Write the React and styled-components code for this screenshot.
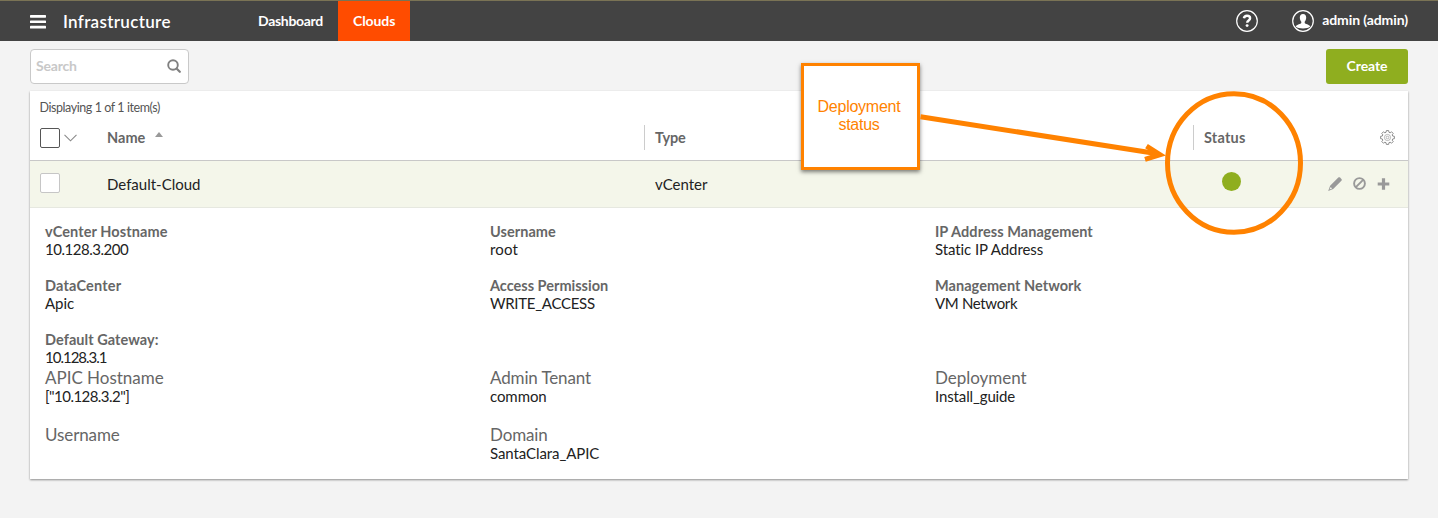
import React from 'react';
import styled, { createGlobalStyle } from 'styled-components';

const GlobalStyle = createGlobalStyle`
  * { box-sizing: border-box; }
  body {
    margin: 0;
    background: #f3f3f3;
    font-family: Lato, 'Liberation Sans', sans-serif;
    color: #222;
  }
`;

const Page = styled.div`
  position: relative;
  width: 1438px;
  height: 518px;
  overflow: hidden;
`;

const Text = styled.span`
  letter-spacing: ${(p) => p.$track || 0}px;
  white-space: nowrap;
`;

const TopBar = styled.header`
  display: flex;
  align-items: stretch;
  height: 41px;
  padding: 0 30px;
  background: #434343;
  border-top: 1px solid #7a7355;
  color: #fff;
`;

const MenuButton = styled.button`
  display: flex;
  align-items: center;
  width: 33px;
  padding: 2px 0 0;
  border: 0;
  background: none;
`;

const AppTitle = styled.h1`
  width: 180px;
  margin: 0;
  font-size: 17px;
  font-weight: 600;
  line-height: 41px;
`;

const Tab = styled.a`
  padding: 0 15px;
  width: ${(p) => p.$width}px;
  font-size: 14px;
  font-weight: 700;
  line-height: 40px;
  background: ${(p) => (p.$active ? '#ff4c00' : 'transparent')};
`;

const UserArea = styled.div`
  display: flex;
  align-items: center;
  margin-left: auto;
  font-size: 14px;
  font-weight: 700;
  line-height: 18px;
  svg { display: block; }
`;

const UserIcon = styled.span`
  margin: 0 8px 0 34px;
`;

const UserName = styled(Text)`
  padding-bottom: 2px;
`;

const Toolbar = styled.div`
  display: flex;
  justify-content: space-between;
  padding: 8px 30px 7px;
`;

const SearchBox = styled.div`
  display: flex;
  align-items: center;
  justify-content: space-between;
  width: 159px;
  height: 35px;
  padding: 0 7px 1px 5px;
  border: 1px solid #c9c9c9;
  border-radius: 4px;
  background: #fff;
  color: #c8c8c8;
  font-size: 14px;
  font-weight: 700;
  line-height: 18px;
`;

const CreateButton = styled.button`
  width: 82px;
  height: 35px;
  padding: 0 0 1px;
  border: 0;
  border-radius: 3px;
  background: #8fae1f;
  color: #fff;
  font: 700 14px/32px Lato, sans-serif;
`;

const Panel = styled.main`
  height: 388px;
  margin: 0 30px;
  background: #fff;
  box-shadow: 0 1px 2px rgba(0, 0, 0, 0.42);
`;

const Summary = styled.div`
  height: 26px;
  padding: 8px 10px 0 9.5px;
  color: #555;
  font-size: 12.5px;
  line-height: 18px;
`;

const GridRow = styled.div`
  display: grid;
  grid-template-columns: 77px 537px 549px 1fr auto;
  align-items: center;
`;

const HeadRow = styled(GridRow)`
  height: 44px;
  padding-bottom: 2px;
  border-bottom: 1px solid #c8c8c8;
  color: #666;
  font-size: 14.5px;
  font-weight: 700;
`;

const DataRow = styled(GridRow)`
  height: 47px;
  border-bottom: 1px solid #e6e8e0;
  background: #f4f6ea;
  font-size: 15px;
  line-height: 18px;
`;

const SelectCell = styled.div`
  display: flex;
  align-items: center;
  gap: 4px;
  padding-left: 10px;
`;

const CheckBox = styled.span`
  width: 20px;
  height: 20px;
  margin-top: ${(p) => (p.$strong ? 0 : -2)}px;
  border: 1px solid ${(p) => (p.$strong ? '#555' : '#c6c6c6')};
  border-radius: 2px;
  background: #fff;
`;

const HeadCell = styled.div`
  display: flex;
  align-items: center;
  height: 25px;
  padding-left: ${(p) => (p.$divided ? 10 : 0)}px;
  border-left: ${(p) => (p.$divided ? '1px solid #ccc' : '0')};
`;

const SortArrow = styled.span`
  margin: -7px 0 0 10px;
  border: 4.5px solid transparent;
  border-top: 0;
  border-bottom: 5px solid #999;
`;

const Cell = styled.div`
  padding: 0 0 1px ${(p) => p.$indent || 0}px;
`;

const StatusDot = styled.span`
  display: block;
  width: 19px;
  height: 19px;
  margin: -4px 0 0 28.5px;
  border-radius: 50%;
  background: #8fae1f;
`;

const Actions = styled.div`
  display: flex;
  align-items: center;
  gap: 11px;
  padding: 0 18px 1px 0;
  svg { display: block; }
`;

const SettingsCell = styled.div`
  padding-right: 13px;
  svg { display: block; }
`;

const Details = styled.dl`
  display: grid;
  grid-template-columns: repeat(3, 445px);
  margin: 0;
  padding: ${(p) => (p.$large ? '1px 0 0 15px' : '14px 0 0 15px')};
  row-gap: ${(p) => (p.$large ? 19 : 18)}px;
`;

const Field = styled.div`
  min-height: ${(p) => (p.$large ? 38 : 36)}px;
`;

const Term = styled.dt`
  padding-top: 1px;
  color: #666;
  font-size: ${(p) => (p.$large ? 17 : 14.5)}px;
  font-weight: ${(p) => (p.$large ? 400 : 700)};
  line-height: ${(p) => (p.$large ? 19 : 17)}px;
  ${(p) => (p.$large ? 'padding-top: 2px; line-height: 18px;' : 'padding-top: 2px; line-height: 16px;')}
`;

const Value = styled.dd`
  margin: 0;
  font-size: 15px;
  line-height: 18px;
`;

const Callout = styled.div`
  position: absolute;
  left: 801px;
  top: 63px;
  width: 119px;
  height: 107px;
  padding: 32px 3px 0 0;
  border: 3px solid #ff8200;
  background: #fff;
  box-shadow: 0 2px 4px rgba(0, 0, 0, 0.5);
  color: #ff8200;
  font: 16px/18px 'Liberation Sans', Arial, sans-serif;
  letter-spacing: -0.25px;
  text-align: center;
`;

const Annotation = styled.svg`
  position: absolute;
  left: 0;
  top: 0;
  pointer-events: none;
`;

const vcenterFields = [
  ['vCenter Hostname', 0.09, '10.128.3.200', -0.47],
  ['Username', 0.05, 'root', 0.12],
  ['IP Address Management', 0.06, 'Static IP Address', -0.08],
  ['DataCenter', 0.18, 'Apic', -0.04],
  ['Access Permission', 0, 'WRITE_ACCESS', -0.28],
  ['Management Network', 0.04, 'VM Network', -0.34],
  ['Default Gateway:', 0.05, '10.128.3.1', -1],
];

const apicFields = [
  ['APIC Hostname', -0.02, '["10.128.3.2"]', -0.54],
  ['Admin Tenant', -0.14, 'common', -0.08],
  ['Deployment', -0.03, 'Install_guide', -0.13],
  ['Username', -0.1, '', 0],
  ['Domain', -0.13, 'SantaClara_APIC', -0.08],
];

const FieldList = ({ fields, large }) => (
  <Details $large={large}>
    {fields.map(([term, termTrack, value, valueTrack]) => (
      <Field key={term} $large={large}>
        <Term $large={large}><Text $track={termTrack}>{term}</Text></Term>
        <Value><Text $track={valueTrack}>{value}</Text></Value>
      </Field>
    ))}
  </Details>
);

const MenuIcon = () => (
  <svg width="16" height="14" viewBox="0 0 16 14" fill="#fff">
    <rect y="0" width="16" height="2.7" rx=".6" />
    <rect y="5.4" width="16" height="2.7" rx=".6" />
    <rect y="10.8" width="16" height="2.7" rx=".6" />
  </svg>
);

const HelpIcon = () => (
  <svg width="22" height="22" viewBox="0 0 22 22" fill="none" stroke="#fff">
    <circle cx="11" cy="11" r="10.3" strokeWidth="1.2" />
    <path d="M7.9 8.300C8.200 6.500 9.400 5.700 11 5.700c1.900 0 3.100 1 3.100 2.500 0 2.300-2.900 2.200-2.900 4.500" strokeWidth="2.400" />
    <circle cx="11.100" cy="15.600" r="1.450" fill="#fff" stroke="none" />
  </svg>
);

const AvatarIcon = () => (
  <svg width="22" height="22" viewBox="0 0 22 22">
    <circle cx="11" cy="11" r="10.3" fill="none" stroke="#fff" strokeWidth="1.2" />
    <path d="M11 4c2.200 0 3.200 1.500 3.200 3.600 0 1.900-.8 3.300-1.500 4.100v1.400c.3 1 4.500 1.400 5.600 3.400-1.700 1.400-4.200 1.900-7.300 1.900s-5.600-.5-7.300-1.900c1.100-2 5.300-2.400 5.600-3.400v-1.400c-.7-.8-1.500-2.200-1.500-4.100C7.800 5.500 8.800 4 11 4z" fill="#fff" />
  </svg>
);

const SearchIcon = () => (
  <svg width="14" height="14" viewBox="0 0 14 14" fill="none" stroke="#808080">
    <circle cx="6" cy="6" r="4.800" strokeWidth="1.900" />
    <path d="M9.500 9.500l3.300 3.300" strokeWidth="2.200" strokeLinecap="round" />
  </svg>
);

const ChevronIcon = () => (
  <svg width="13" height="8" viewBox="0 0 13 8" fill="none" stroke="#8a8a8a">
    <path d="M.5 .8L6.500 6.800l6-6" strokeWidth="1.100" />
  </svg>
);

const gearPath = (() => {
  const points = [];
  for (let i = 0; i < 8; i += 1) {
    [[-0.27, 5.4], [-0.17, 7], [0.17, 7], [0.27, 5.4]].forEach(([offset, radius]) => {
      const angle = (i * Math.PI) / 4 + offset;
      points.push(`${(7.5 + radius * Math.sin(angle)).toFixed(2)} ${(7.5 - radius * Math.cos(angle)).toFixed(2)}`);
    });
  }
  return `M${points.join('L')}Z`;
})();

const GearIcon = () => (
  <svg width="15" height="15" viewBox="0 0 15 15" fill="none" stroke="#8c8c8c" strokeWidth="1" strokeLinejoin="round">
    <path d={gearPath} />
    <circle cx="7.500" cy="7.500" r="3.100" strokeWidth=".6" />
    <circle cx="7.500" cy="7.500" r="1.300" strokeWidth=".6" />
  </svg>
);

const PencilIcon = () => (
  <svg width="14" height="14" viewBox="0 0 14 14" fill="#999">
    <path d="M10.300.6c.6-.6 1.200-.6 1.800 0l1.300 1.300c.6.600.6 1.200 0 1.800L5.200 11.900.2 13.900l1.900-5.100zM2.700 10l-1.200 2.600 2.600-1.200z" fillRule="evenodd" />
  </svg>
);

const BanIcon = () => (
  <svg width="13" height="13" viewBox="0 0 13 13" fill="none" stroke="#999" strokeWidth="1.900">
    <circle cx="6.500" cy="6.500" r="5.400" />
    <path d="M2.900 10.100l7.200-7.200" />
  </svg>
);

const PlusIcon = () => (
  <svg width="13" height="12" viewBox="0 0 13 12" fill="#999">
    <path d="M4.900.2h3.200v4.200h4.200v3.200H8.100v4.200H4.900V7.600H.7V4.400h4.200z" />
  </svg>
);

export default function App() {
  return (
    <Page>
      <GlobalStyle />
      <TopBar>
        <MenuButton aria-label="Menu"><MenuIcon /></MenuButton>
        <AppTitle><Text $track={0.32}>Infrastructure</Text></AppTitle>
        <Tab $width={95}><Text $track={-0.31}>Dashboard</Text></Tab>
        <Tab $width={72} $active><Text $track={-0.08}>Clouds</Text></Tab>
        <UserArea>
          <HelpIcon />
          <UserIcon><AvatarIcon /></UserIcon>
          <UserName $track={-0.1}>admin (admin)</UserName>
        </UserArea>
      </TopBar>
      <Toolbar>
        <SearchBox><Text $track={-0.2}>Search</Text><SearchIcon /></SearchBox>
        <CreateButton><Text $track={-0.08}>Create</Text></CreateButton>
      </Toolbar>
      <Panel>
        <Summary><Text $track={-0.43}>Displaying 1 of 1 item(s)</Text></Summary>
        <HeadRow>
          <SelectCell><CheckBox $strong /><ChevronIcon /></SelectCell>
          <HeadCell><Text $track={0.04}>Name</Text><SortArrow /></HeadCell>
          <HeadCell $divided><Text $track={-0.08}>Type</Text></HeadCell>
          <HeadCell $divided><Text $track={0.23}>Status</Text></HeadCell>
          <SettingsCell><GearIcon /></SettingsCell>
        </HeadRow>
        <DataRow>
          <SelectCell><CheckBox /></SelectCell>
          <Cell><Text>Default-Cloud</Text></Cell>
          <Cell $indent={11}><Text>vCenter</Text></Cell>
          <Cell><StatusDot /></Cell>
          <Actions><PencilIcon /><BanIcon /><PlusIcon /></Actions>
        </DataRow>
        <FieldList fields={vcenterFields} />
        <FieldList fields={apicFields} large />
      </Panel>
      <Callout>Deployment<br />status</Callout>
      <Annotation width="1438" height="518" fill="none" stroke="#ff8200" strokeWidth="5">
        <ellipse cx="1234" cy="163" rx="66.500" ry="69.300" />
        <path d="M920.500 116.700L1156 153.500" />
        <path d="M1146.500 146.200L1160 154.700 1145 159.300" />
      </Annotation>
    </Page>
  );
}
